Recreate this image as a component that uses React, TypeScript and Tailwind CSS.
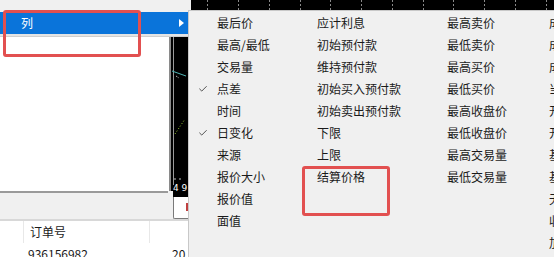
import { Check } from "lucide-react";

const col1 = [
  { t: "最后价" },
  { t: "最高/最低" },
  { t: "交易量" },
  { t: "点差", checked: true },
  { t: "时间" },
  { t: "日变化", checked: true },
  { t: "来源" },
  { t: "报价大小" },
  { t: "报价值" },
  { t: "面值" },
];
const col2 = ["应计利息", "初始预付款", "维持预付款", "初始买入预付款", "初始卖出预付款", "下限", "上限", "结算价格"];
const col3 = ["最高卖价", "最低卖价", "最高买价", "最低买价", "最高收盘价", "最低收盘价", "最高交易量", "最低交易量"];
const col4 = ["成交价", "成交量", "成交额", "当前价", "开盘价", "开盘量", "基准价", "基差", "无风险", "收益率", "加权价"];

const ticks = [207, 238, 269, 300, 330, 361, 392, 423, 453, 484, 515, 546];

function Row({ text, checked }: { text: string; checked?: boolean }) {
  return (
    <div className="h-[22px] flex items-center relative whitespace-nowrap">
      {checked && (
        <Check className="absolute -left-[19px] w-[10px] h-[10px] text-[#333]" strokeWidth={2} />
      )}
      {text}
    </div>
  );
}

export default function App() {
  return (
    <div className="relative w-[554px] h-[257px] overflow-hidden flex bg-[#f0f0f0] font-['Noto_Sans_CJK_SC','Microsoft_YaHei',sans-serif] text-[12px] text-[#1a1a1a]">
      {/* Left: context menu + window behind */}
      <div className="w-[188px] h-[257px] flex flex-col shrink-0 overflow-hidden">
        <div className="h-[12px] shrink-0 bg-[#f0f0f0]" />
        <div className="h-[22px] shrink-0 bg-[#0a74da] text-white flex items-center justify-between pl-[21px] pr-[4px]">
          <span>列</span>
          <svg width="5" height="8" viewBox="0 0 5 8">
            <polygon points="0,0 5,4 0,8" fill="#fff" />
          </svg>
        </div>
        <div className="h-[3px] shrink-0 bg-[#e4e4e4] border-b border-[#cfcfcf]" />

        {/* panel + chart strip */}
        <div className="h-[154px] shrink-0 flex">
          <div className="w-[171px] bg-white border-r-2 border-[#8a8a8a]" />
          <div className="flex-1 bg-black relative">
            <svg width="15" height="154" viewBox="0 0 15 154" className="block">
              <line x1="2.5" y1="0" x2="2.5" y2="148" stroke="#9a9a9a" strokeWidth="1" />
              <line x1="1" y1="34" x2="15" y2="39" stroke="#4fb3b3" strokeWidth="1" />
              <line x1="5" y1="39" x2="8" y2="41" stroke="#d8d8d8" strokeWidth="1" strokeDasharray="1 1" />
              <line x1="4" y1="97" x2="14" y2="82" stroke="#9acd32" strokeWidth="1" strokeDasharray="1 2" />
              <line x1="3" y1="142" x2="13" y2="142" stroke="#c0c0c0" strokeWidth="1" strokeDasharray="2 3" />
            </svg>
            <span className="absolute left-[2px] bottom-[-3px] text-[9px] leading-[12px] text-white font-['DejaVu_Sans',sans-serif]">
              4 9
            </span>
          </div>
        </div>

        {/* bottom gray strip with tab */}
        <div className="h-[28px] shrink-0 flex bg-[#f0f0f0]">
          <div className="w-[168px] border-t-2 border-[#9a9a9a]" />
          <div className="w-[5px]" />
          <div className="flex-1 flex flex-col">
            <div className="h-[6px] bg-black" />
            <div className="flex-1 bg-white border-l border-b border-[#7a7a7a] rounded-bl-[2px] relative">
              <div className="absolute right-0 top-[6px] w-[2px] h-[8px] bg-[#c04040]" />
            </div>
          </div>
        </div>

        {/* table */}
        <div className="h-[46px] shrink-0 bg-white border-t-2 border-[#d8d8d8] flex flex-col">
          <div className="h-[22px] shrink-0 flex">
            <div className="w-[24px] border-r border-[#e8e8e8]" />
            <div className="w-[126px] border-r border-[#e8e8e8] pl-[6px] flex items-center">订单号</div>
          </div>
          <div className="h-[22px] shrink-0 flex items-center relative">
            <span className="pl-[28px]">936156982</span>
            <span className="absolute left-[172px]">20</span>
          </div>
        </div>
      </div>

      {/* Right: chart top + submenu */}
      <div className="flex-1 flex flex-col">
        <div className="h-[10px] shrink-0 bg-black ml-[3px] relative">
          <svg width="366" height="10" viewBox="0 0 366 10" className="absolute left-0 top-0">
            {ticks.map((x) => (
              <line
                key={x}
                x1={x - 191 + 0.5}
                y1="0"
                x2={x - 191 + 0.5}
                y2="10"
                stroke="#8a8a8a"
                strokeWidth="1"
                strokeDasharray="2 2"
              />
            ))}
          </svg>
        </div>
        <div className="flex-1 bg-[#f0f0f0] border-l border-t border-[#c8c8c8] flex pt-[1px] pl-[28px]">
          <div className="w-[100px] shrink-0">
            {col1.map((r) => (
              <Row key={r.t} text={r.t} checked={r.checked} />
            ))}
          </div>
          <div className="w-[130px] shrink-0">
            {col2.map((t) => (
              <Row key={t} text={t} />
            ))}
          </div>
          <div className="w-[102px] shrink-0">
            {col3.map((t) => (
              <Row key={t} text={t} />
            ))}
          </div>
          <div className="shrink-0">
            {col4.map((t) => (
              <Row key={t} text={t} />
            ))}
          </div>
        </div>
      </div>

      {/* red annotation boxes */}
      <div className="absolute left-[3px] top-[10px] w-[138px] h-[47px] border-[3px] border-[#e25050] rounded-[3px]" />
      <div className="absolute left-[302px] top-[166px] w-[88px] h-[50px] border-[3px] border-[#e25050] rounded-[3px]" />
    </div>
  );
}
